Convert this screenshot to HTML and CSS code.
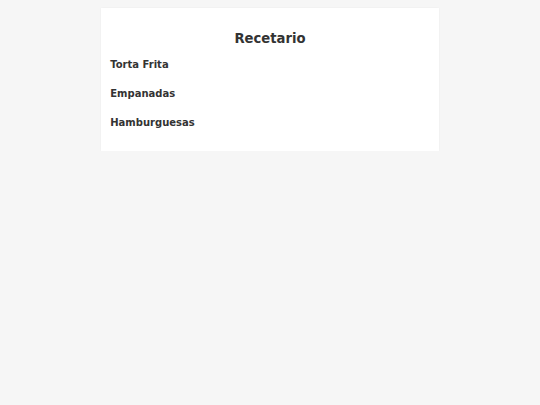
FILE: index.html
```html
<!DOCTYPE html>
<html lang="es">
<head>
<meta charset="utf-8">
<title>Recetario</title>
<link rel="stylesheet" href="styles.css">
</head>
<body>
<main class="card">
  <h1 class="title">Recetario</h1>
  <ul class="recipes">
    <li class="recipe">Torta Frita</li>
    <li class="recipe">Empanadas</li>
    <li class="recipe">Hamburguesas</li>
  </ul>
</main>
</body>
</html>
```

FILE: styles.css
```css
html, body {
  margin: 0;
  padding: 0;
  background: #f6f6f6;
}
body {
  font-family: "DejaVu Sans", sans-serif;
  color: #333333;
  padding-top: 8.3px;
}
.card {
  box-sizing: border-box;
  width: 62.5%;
  margin: 0 auto;
  background: #ffffff;
  box-shadow: 0 0 2px rgba(0, 0, 0, 0.05);
  padding: 20.5px 9px 21px;
  display: flex;
  flex-direction: column;
  gap: 9.5px;
}
.title {
  margin: 0;
  font-size: 13.2px;
  line-height: 20px;
  font-weight: bold;
  text-align: center;
}
.recipes {
  list-style: none;
  margin: 0;
  padding: 0;
  display: flex;
  flex-direction: column;
  gap: 14.4px;
}
.recipe {
  font-size: 10px;
  line-height: 14.4px;
  font-weight: bold;
}
```
